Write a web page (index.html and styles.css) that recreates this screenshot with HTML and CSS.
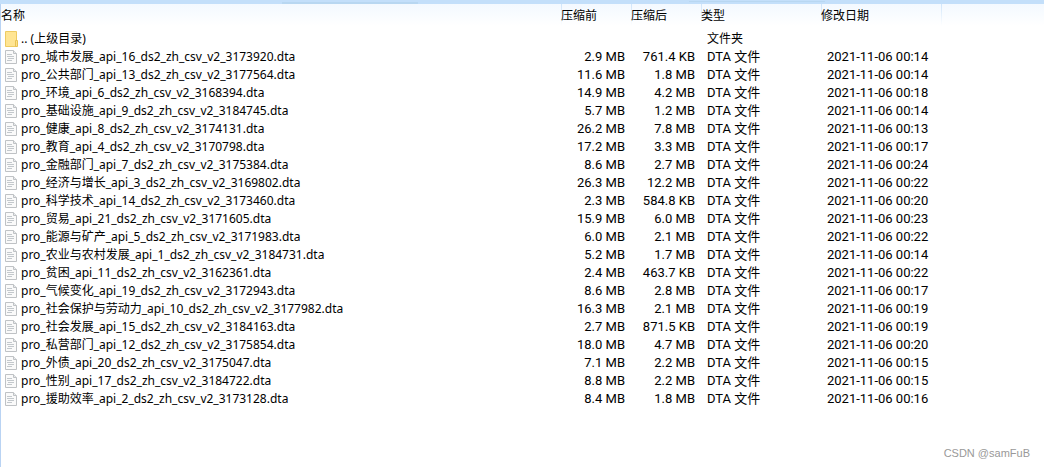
FILE: index.html
```html
<!DOCTYPE html>
<html lang="zh-CN">
<head>
  <meta charset="UTF-8">
  <meta name="viewport" content="width=device-width, initial-scale=1.0">
  <title>文件列表</title>
  <link rel="stylesheet" href="styles.css">
</head>
<body>

  <!-- Icon shapes used by the rows -->
  <svg class="icon-defs" aria-hidden="true">
    <symbol id="icon-file" viewBox="0 0 12 14">
      <path d="M.5.5h8l3 3v10H.5z" fill="#fafafa" stroke="#bfc2c5"/>
      <path d="M8.5.5v3h3" fill="#e8eaec" stroke="#bfc2c5"/>
      <path d="M2 4.5h5M2 6.5h7M3 8.5h6M2 10.5h5" stroke="#c3c8cc"/>
    </symbol>
    <symbol id="icon-folder" viewBox="0 0 13 16">
      <path d="M.5.5h11v15H.5z" fill="#ffe593" stroke="#eecb62"/>
      <path d="M10.5 9.5h2v6h-2z" fill="#fde28a" stroke="#e9c354"/>
    </symbol>
  </svg>

  <div class="top-bar"></div>

  <main class="panel">
    <table class="file-table">
      <colgroup>
        <col class="col-name">
        <col class="col-size">
        <col class="col-size">
        <col class="col-type">
        <col class="col-date">
        <col>
      </colgroup>
      <thead>
        <tr>
          <th>名称</th>
          <th>压缩前</th>
          <th>压缩后</th>
          <th>类型</th>
          <th>修改日期</th>
          <th></th>
        </tr>
      </thead>
      <tbody id="fileList">
        <tr>
          <td><a class="name" href="#"><svg class="folder"><use href="#icon-folder"/></svg>.. (上级目录)</a></td>
          <td></td>
          <td></td>
          <td class="type">文件夹</td>
          <td></td>
          <td></td>
        </tr>
      </tbody>
    </table>
  </main>

  <div class="watermark">CSDN @samFuB</div>

  <script>
    // name, size, packed size, time
    const files = [
      ["pro_城市发展_api_16_ds2_zh_csv_v2_3173920.dta", "2.9 MB", "761.4 KB", "00:14"],
      ["pro_公共部门_api_13_ds2_zh_csv_v2_3177564.dta", "11.6 MB", "1.8 MB", "00:14"],
      ["pro_环境_api_6_ds2_zh_csv_v2_3168394.dta", "14.9 MB", "4.2 MB", "00:18"],
      ["pro_基础设施_api_9_ds2_zh_csv_v2_3184745.dta", "5.7 MB", "1.2 MB", "00:14"],
      ["pro_健康_api_8_ds2_zh_csv_v2_3174131.dta", "26.2 MB", "7.8 MB", "00:13"],
      ["pro_教育_api_4_ds2_zh_csv_v2_3170798.dta", "17.2 MB", "3.3 MB", "00:17"],
      ["pro_金融部门_api_7_ds2_zh_csv_v2_3175384.dta", "8.6 MB", "2.7 MB", "00:24"],
      ["pro_经济与增长_api_3_ds2_zh_csv_v2_3169802.dta", "26.3 MB", "12.2 MB", "00:22"],
      ["pro_科学技术_api_14_ds2_zh_csv_v2_3173460.dta", "2.3 MB", "584.8 KB", "00:20"],
      ["pro_贸易_api_21_ds2_zh_csv_v2_3171605.dta", "15.9 MB", "6.0 MB", "00:23"],
      ["pro_能源与矿产_api_5_ds2_zh_csv_v2_3171983.dta", "6.0 MB", "2.1 MB", "00:22"],
      ["pro_农业与农村发展_api_1_ds2_zh_csv_v2_3184731.dta", "5.2 MB", "1.7 MB", "00:14"],
      ["pro_贫困_api_11_ds2_zh_csv_v2_3162361.dta", "2.4 MB", "463.7 KB", "00:22"],
      ["pro_气候变化_api_19_ds2_zh_csv_v2_3172943.dta", "8.6 MB", "2.8 MB", "00:17"],
      ["pro_社会保护与劳动力_api_10_ds2_zh_csv_v2_3177982.dta", "16.3 MB", "2.1 MB", "00:19"],
      ["pro_社会发展_api_15_ds2_zh_csv_v2_3184163.dta", "2.7 MB", "871.5 KB", "00:19"],
      ["pro_私营部门_api_12_ds2_zh_csv_v2_3175854.dta", "18.0 MB", "4.7 MB", "00:20"],
      ["pro_外债_api_20_ds2_zh_csv_v2_3175047.dta", "7.1 MB", "2.2 MB", "00:15"],
      ["pro_性别_api_17_ds2_zh_csv_v2_3184722.dta", "8.8 MB", "2.2 MB", "00:15"],
      ["pro_援助效率_api_2_ds2_zh_csv_v2_3173128.dta", "8.4 MB", "1.8 MB", "00:16"]
    ];

    const fileList = document.getElementById("fileList");
    files.forEach(([name, size, packed, time]) => {
      const row = document.createElement("tr");
      row.innerHTML = `
        <td><a class="name" href="#"><svg class="file"><use href="#icon-file"/></svg>${name}</a></td>
        <td class="size">${size}</td>
        <td class="size">${packed}</td>
        <td class="type file-type">DTA 文件</td>
        <td class="date">2021-11-06 ${time}</td>
        <td></td>
      `;
      fileList.appendChild(row);
    });
  </script>
</body>
</html>
```

FILE: styles.css
```css
/* General Styling */
* {
  box-sizing: border-box;
}

body {
  font-family: "Noto Sans", "Noto Sans CJK SC", sans-serif;
  font-size: 12px;
  line-height: 18px;
  color: #000;
  background-color: #fff;
  margin: 0;
  min-height: 100vh;
  display: flex;
  flex-direction: column;
}

.icon-defs {
  display: none;
}

.top-bar {
  height: 4px;
  background:
    linear-gradient(to right, transparent 27%, #b8d7f1 27%, #b8d7f1 40%, transparent 40%) 0 2px no-repeat,
    linear-gradient(to right, transparent 66%, #b8d7f1 66%, #b8d7f1 79%, transparent 79%) 0 1px / 100% 1px no-repeat,
    #c3dffa;
}

.panel {
  flex: 1;
  border-left: 1px solid #b9d3f3;
}

/* File table */
.file-table {
  width: 100%;
  table-layout: fixed;
  border-collapse: collapse;
}

.col-name {
  width: 560px;
}

.col-size {
  width: 70px;
}

.col-type,
.col-date {
  width: 120px;
}

thead {
  background: linear-gradient(#f3f9ff, #fff 22px);
}

th {
  height: 26px;
  padding: 0 0 2px;
  font-weight: normal;
  text-align: left;
  white-space: nowrap;
}

th + th {
  background: linear-gradient(#cfe5fa, #fff 22px) 0 0 / 1px 22px no-repeat;
}

td {
  height: 18px;
  padding: 0;
  white-space: nowrap;
}

.name {
  display: flex;
  align-items: center;
  height: 18px;
  padding-left: 4px;
  color: inherit;
  text-decoration: none;
}

.name svg {
  flex: none;
}

.folder {
  width: 13px;
  height: 16px;
  margin-right: 3px;
}

.file {
  width: 12px;
  height: 14px;
  margin-right: 4px;
}

.size,
.date,
.file-type {
  font-family: Roboto, "Noto Sans CJK SC", sans-serif;
  font-size: 13px;
}

.size {
  padding-right: 6px;
  text-align: right;
}

.type,
.date {
  padding-left: 6px;
}

/* Watermark over the list */
.watermark {
  position: absolute;
  right: 14px;
  bottom: 5px;
  font-family: "Liberation Sans", Arial, sans-serif;
  font-size: 11px;
  color: #999;
}
```
